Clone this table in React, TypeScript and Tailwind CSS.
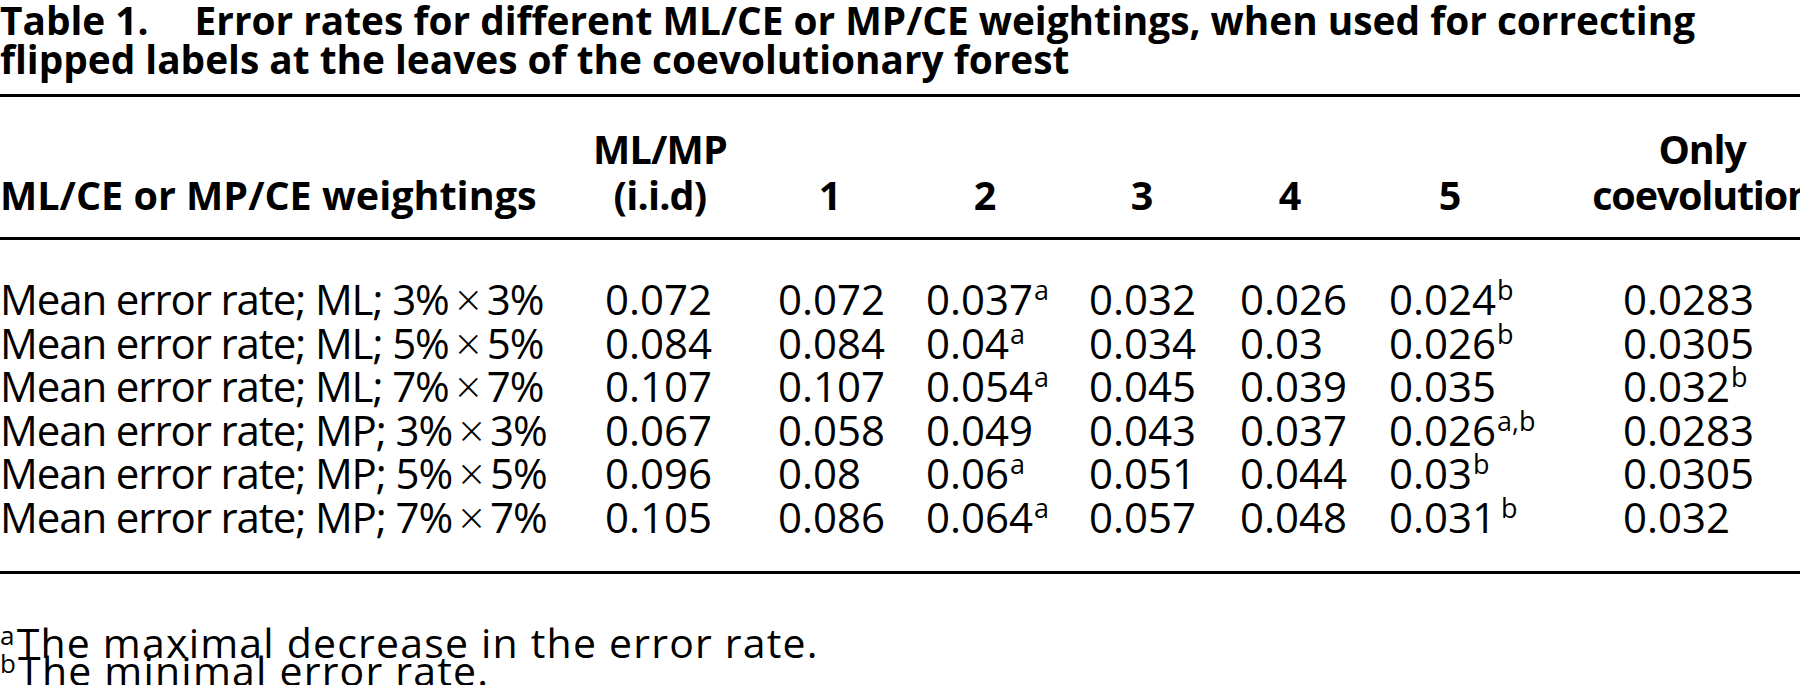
import React from "react";

const cols = "grid-cols-[605px_173px_148px_163px_151px_149px_234px_177px]";

type Cell = { v: string; s?: string; gap?: boolean };
const rows: { label: [string, string, string]; cells: Cell[] }[] = [
  {
    label: ["Mean error rate; ML; ", "3%", "3%"],
    cells: [{ v: "0.072" }, { v: "0.072" }, { v: "0.037", s: "a" }, { v: "0.032" }, { v: "0.026" }, { v: "0.024", s: "b" }, { v: "0.0283" }],
  },
  {
    label: ["Mean error rate; ML; ", "5%", "5%"],
    cells: [{ v: "0.084" }, { v: "0.084" }, { v: "0.04", s: "a" }, { v: "0.034" }, { v: "0.03" }, { v: "0.026", s: "b" }, { v: "0.0305" }],
  },
  {
    label: ["Mean error rate; ML; ", "7%", "7%"],
    cells: [{ v: "0.107" }, { v: "0.107" }, { v: "0.054", s: "a" }, { v: "0.045" }, { v: "0.039" }, { v: "0.035" }, { v: "0.032", s: "b" }],
  },
  {
    label: ["Mean error rate; MP; ", "3%", "3%"],
    cells: [{ v: "0.067" }, { v: "0.058" }, { v: "0.049" }, { v: "0.043" }, { v: "0.037" }, { v: "0.026", s: "a,b" }, { v: "0.0283" }],
  },
  {
    label: ["Mean error rate; MP; ", "5%", "5%"],
    cells: [{ v: "0.096" }, { v: "0.08" }, { v: "0.06", s: "a" }, { v: "0.051" }, { v: "0.044" }, { v: "0.03", s: "b" }, { v: "0.0305" }],
  },
  {
    label: ["Mean error rate; MP; ", "7%", "7%"],
    cells: [{ v: "0.105" }, { v: "0.086" }, { v: "0.064", s: "a" }, { v: "0.057" }, { v: "0.048" }, { v: "0.031", s: "b", gap: true }, { v: "0.032" }],
  },
];

const headers: { w: string; lines: string[]; t?: string }[] = [
  { w: "w-[110px]", lines: ["ML/MP", "(i.i.d)"], t: "tracking-[-0.8px]" },
  { w: "w-[104px]", lines: ["1"] },
  { w: "w-[118px]", lines: ["2"] },
  { w: "w-[106px]", lines: ["3"] },
  { w: "w-[100px]", lines: ["4"] },
  { w: "w-[122px]", lines: ["5"] },
  { w: "w-[158px]", lines: ["Only", "coevolution"], t: "tracking-[-1.2px]" },
];

function Sup({ t, gap }: { t: string; gap?: boolean }) {
  return (
    <span className={`relative top-[-15px] text-[27px] leading-[0] ${gap ? "ml-[5px]" : "ml-[1px]"}`}>{t}</span>
  );
}

export default function App() {
  return (
    <div
      className="w-[1800px] h-[685px] overflow-hidden bg-white text-black"
      style={{ fontFamily: "'Open Sans', 'Noto Sans', sans-serif" }}
    >
      <div className="pt-[1px] text-[38.8px] leading-[39px] font-bold">
        <div className="whitespace-nowrap">
          <span className="mr-[46px]">Table 1.</span>
          <span>Error rates for different ML/CE or MP/CE weightings, when used for correcting</span>
        </div>
        <div className="whitespace-nowrap">flipped labels at the leaves of the coevolutionary forest</div>
      </div>

      <div className="mt-[15px] h-[3px] bg-black" />

      <div className={`grid ${cols} mt-[29px] text-[39.5px] leading-[46px] font-bold`}>
        <div className="flex items-end whitespace-nowrap">ML/CE or MP/CE weightings</div>
        {headers.map((h, i) => (
          <div key={i} className="flex flex-col justify-end">
            <div className={`${h.w} ${h.t ?? ""} flex flex-col items-center whitespace-nowrap`}>
              {h.lines.map((l) => (
                <span key={l}>{l}</span>
              ))}
            </div>
          </div>
        ))}
      </div>

      <div className="mt-[19px] h-[3px] bg-black" />

      <div className="mt-[37px] text-[42px] leading-[43.6px]">
        {rows.map((r) => (
          <div key={r.label.join("")} className={`grid ${cols} h-[43.6px]`}>
            <div className="whitespace-nowrap tracking-[-1.1px]">
              {r.label[0]}
              {r.label[1]}
              <span className="relative top-[1px] mx-[7px] text-[44px] leading-[0] font-light">{"\u00d7"}</span>
              {r.label[2]}
            </div>
            {r.cells.map((c, i) => (
              <div key={i} className="whitespace-nowrap">
                {c.v}
                {c.s && <Sup t={c.s} gap={c.gap} />}
              </div>
            ))}
          </div>
        ))}
      </div>

      <div className="mt-[32px] h-[3px] bg-black" />

      <div className="mt-[54px] text-[41px] leading-[28px] tracking-[1.2px]">
        <div className="whitespace-nowrap h-[28px]">
          <span className="relative top-[-13px] text-[26px] leading-[0] mr-[1px]">a</span>The maximal decrease in the error rate.
        </div>
        <div className="whitespace-nowrap h-[28px]">
          <span className="relative top-[-13px] text-[26px] leading-[0] mr-[1px]">b</span>The minimal error rate.
        </div>
      </div>
    </div>
  );
}
